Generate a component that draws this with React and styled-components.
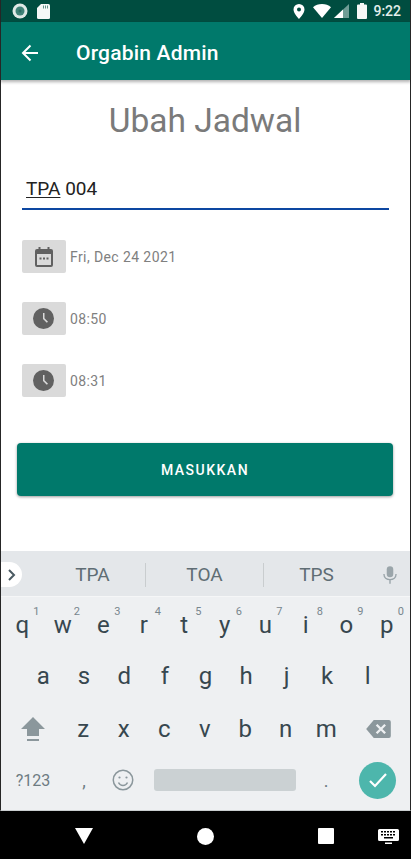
import React from "react";
import styled, { createGlobalStyle } from "styled-components";

const Global = createGlobalStyle`
  html, body {
    margin: 0;
    padding: 0;
    background: #fff;
  }
  * {
    box-sizing: border-box;
  }
`;

const Screen = styled.div`
  width: 411px;
  height: 859px;
  display: flex;
  flex-direction: column;
  overflow: hidden;
  font-family: Roboto, "Liberation Sans", sans-serif;
  background: #fff;
`;

const StatusBar = styled.div`
  height: 22px;
  flex: none;
  background: #004d40;
  border-left: 1px solid #262626;
  border-right: 1px solid #262626;
  display: flex;
  align-items: center;
  padding: 0 9px 0 11px;
  gap: 9px;
  color: #fff;
`;

const StatusTime = styled.span`
  font-size: 14px;
  font-weight: 500;
  color: #e4efec;
  margin-left: 1px;
`;

const Spacer = styled.div`
  flex: 1;
`;

const StatusIcons = styled.div`
  display: flex;
  align-items: center;
  gap: 5px;
`;

const Pin = styled.svg`
  margin-right: 3px;
`;

const Signal = styled.svg`
  margin-left: -2px;
`;

const Battery = styled.svg`
  margin-left: 3px;
`;

const AppBar = styled.div`
  height: 58px;
  flex: none;
  background: #00796b;
  border-left: 1px solid #262626;
  border-right: 1px solid #262626;
  box-shadow: 0 2px 3px rgba(0, 0, 0, 0.3);
  display: flex;
  align-items: center;
  padding: 3px 0 0 20px;
  gap: 37px;
  position: relative;
  z-index: 1;
`;

const AppTitle = styled.h1`
  margin: 0;
  font-size: 21px;
  font-weight: 500;
  color: #fff;
  letter-spacing: 0.2px;
`;

const Content = styled.main`
  height: 471px;
  flex: none;
  border-left: 1px solid #262626;
  border-right: 1px solid #262626;
  padding: 20px 17px 0 16px;
  display: flex;
  flex-direction: column;
`;

const Heading = styled.h2`
  margin: 0;
  text-align: center;
  font-size: 33.5px;
  line-height: 42px;
  font-weight: 400;
  color: #7a7a7a;
`;

const NameField = styled.div`
  margin: 30px 4px 0 5px;
  height: 38px;
  padding-left: 4px;
  border-bottom: 2px solid #0d47a1;
  font-size: 19px;
  line-height: 34px;
  color: #222;
`;

const Composing = styled.span`
  text-decoration: underline;
  text-underline-offset: 2px;
  text-decoration-thickness: 1px;
`;

const PickerList = styled.div`
  margin: 30px 0 0 4.5px;
  display: flex;
  flex-direction: column;
  gap: 29px;
`;

const PickerRow = styled.div`
  display: flex;
  align-items: center;
  gap: 4.5px;
  height: 33px;
`;

const PickerButton = styled.div`
  width: 44px;
  height: 33px;
  border-radius: 2px;
  background: #dadada;
  display: flex;
  align-items: center;
  justify-content: center;
`;

const PickerText = styled.span`
  font-size: 14px;
  color: #808080;
  letter-spacing: 0.4px;
`;

const SubmitButton = styled.button`
  margin-top: 46px;
  height: 53px;
  width: 376px;
  border: 0;
  border-radius: 4px;
  background: #00796b;
  color: #fff;
  font-family: inherit;
  font-size: 14px;
  font-weight: 500;
  letter-spacing: 1.5px;
  box-shadow: 0 1px 3px rgba(0, 0, 0, 0.4);
`;

const Keyboard = styled.div`
  height: 260px;
  flex: none;
  background: #eef0f2;
  border-left: 1px solid #262626;
  border-right: 1px solid #262626;
  border-bottom: 1px solid #c9cdcf;
  display: flex;
  flex-direction: column;
`;

const Suggestions = styled.div`
  height: 46px;
  flex: none;
  background: #e4e7ea;
  border-bottom: 1px solid #f5f6f7;
  display: grid;
  grid-template-columns: 39px 106px 118px 105px 1fr;
  align-items: center;
  padding-top: 2px;
`;

const Expand = styled.div`
  width: 21px;
  height: 25px;
  background: #fff;
  border-radius: 0 13px 13px 0;
  display: flex;
  align-items: center;
  justify-content: center;
`;

const Suggestion = styled.div`
  height: 24px;
  display: flex;
  align-items: center;
  justify-content: center;
  font-size: 19px;
  color: #5f6d74;
  border-right: ${(p) => (p.$divider ? "1px solid #c9cdcf" : "none")};
`;

const Mic = styled.div`
  display: flex;
  justify-content: center;
`;

const KeyRow = styled.div`
  height: ${(p) => p.$height}px;
  flex: none;
  display: grid;
  grid-template-columns: ${(p) => p.$columns};
  padding: ${(p) => p.$pad || "0"};
  align-items: center;
`;

const Key = styled.div`
  position: relative;
  text-align: center;
  font-size: 24px;
  line-height: 30px;
  color: #37474f;
  display: flex;
  align-items: center;
  justify-content: center;
`;

const Hint = styled.span`
  position: absolute;
  top: -4px;
  right: 3px;
  font-size: 11px;
  line-height: 12px;
  color: #78868d;
`;

const FnKey = styled.div`
  display: flex;
  align-items: center;
  justify-content: center;
  font-size: ${(p) => p.$size || 16}px;
  color: #6d7b82;
`;

const ShiftKey = styled(FnKey)`
  padding-left: 2px;
`;

const SpaceBar = styled.div`
  width: 142px;
  height: 22px;
  justify-self: center;
  border-radius: 3px;
  background: #cbd1d3;
`;

const DoneKey = styled.div`
  width: 37px;
  height: 37px;
  border-radius: 50%;
  background: #4db6ac;
  display: flex;
  align-items: center;
  justify-content: center;
  justify-self: center;
  margin-right: 1px;
`;

const NavBar = styled.div`
  height: 48px;
  flex: none;
  background: #000;
  display: grid;
  grid-template-columns: 54px 60px 182px 60px 10px 1fr;
  align-items: center;
  padding-top: 2px;
`;

const NavSlot = styled.div`
  grid-column: ${(p) => p.$col};
  display: flex;
  justify-content: center;
`;

const rows = [
  ["q1", "w2", "e3", "r4", "t5", "y6", "u7", "i8", "o9", "p0"],
  ["a", "s", "d", "f", "g", "h", "j", "k", "l"],
  ["z", "x", "c", "v", "b", "n", "m"],
];

export default function App() {
  return (
    <Screen>
      <Global />
      <StatusBar>
        <svg width="16" height="16" viewBox="0 0 16 16">
          <circle cx="8" cy="8" r="7.5" fill="#dfe9e6" />
          <circle cx="8" cy="8" r="4.5" fill="#3f8277" />
          <circle cx="8" cy="8" r="1.5" fill="#2a6d62" />
        </svg>
        <svg width="13" height="15" viewBox="0 0 13 15">
          <path d="M4 0h7.5A1.5 1.5 0 0 1 13 1.5v12a1.5 1.5 0 0 1-1.5 1.5h-10A1.5 1.5 0 0 1 0 13.500V4z" fill="#f5f8f7" />
          <path d="M6 1.500h1v3H6zM8 1.500h1v3H8zM10 1.500h1v3h-1z" fill="#004d40" opacity=".6" />
        </svg>
        <Spacer />
        <StatusIcons>
          <Pin width="12" height="15" viewBox="0 0 12 15">
            <path d="M6 0a5.500 5.500 0 0 0-5.500 5.500C.5 9.500 6 15 6 15s5.500-5.500 5.500-9.500A5.500 5.500 0 0 0 6 0zm0 7.500a2 2 0 1 1 0-4 2 2 0 0 1 0 4z" fill="#fff" />
          </Pin>
          <svg width="18" height="14" viewBox="0 0 18 14">
            <path d="M9 14L0 3.200C2.400 1.200 5.500 0 9 0s6.600 1.200 9 3.200z" fill="#fff" />
          </svg>
          <Signal width="15" height="14" viewBox="0 0 15 14">
            <path d="M0 14L15 0v14z" fill="#6f9d95" />
            <path d="M0 14l9-8.400V14z" fill="#fff" />
          </Signal>
          <Battery width="10" height="16" viewBox="0 0 10 16">
            <path d="M3 0h4v1.500h2a1 1 0 0 1 1 1V15a1 1 0 0 1-1 1H1a1 1 0 0 1-1-1V2.500a1 1 0 0 1 1-1h2z" fill="#f5f8f7" />
          </Battery>
          <StatusTime>9:22</StatusTime>
        </StatusIcons>
      </StatusBar>

      <AppBar>
        <svg width="18" height="18" viewBox="0 0 18 18" fill="none" stroke="#fff" strokeWidth="2">
          <path d="M17 9H2M9.500 1.500L2 9l7.500 7.500" />
        </svg>
        <AppTitle>Orgabin Admin</AppTitle>
      </AppBar>

      <Content>
        <Heading>Ubah Jadwal</Heading>
        <NameField>
          <Composing>TPA</Composing> 004
        </NameField>
        <PickerList>
          <PickerRow>
            <PickerButton>
              <svg width="20" height="20" viewBox="0 0 20 20">
                <path d="M4.500 0h2v2h7V0h2v2H17a2 2 0 0 1 2 2v14a2 2 0 0 1-2 2H3a2 2 0 0 1-2-2V4a2 2 0 0 1 2-2h1.500zM3 7v11h14V7z" fill="#616161" />
                <path d="M5.500 10.500h2v2h-2zM9 10.500h2v2H9zM12.500 10.500h2v2h-2z" fill="#616161" />
              </svg>
            </PickerButton>
            <PickerText>Fri, Dec 24 2021</PickerText>
          </PickerRow>
          {["08:50", "08:31"].map((t) => (
            <PickerRow key={t}>
              <PickerButton>
                <svg width="21" height="21" viewBox="0 0 21 21">
                  <circle cx="10.500" cy="10.500" r="10.500" fill="#616161" />
                  <path d="M10 5h1.500v5.200l3.500 3.500-1.200 1.100-3.800-3.900z" fill="#dadada" />
                </svg>
              </PickerButton>
              <PickerText>{t}</PickerText>
            </PickerRow>
          ))}
        </PickerList>
        <SubmitButton>MASUKKAN</SubmitButton>
      </Content>

      <Keyboard>
        <Suggestions>
          <Expand>
            <svg width="9" height="12" viewBox="0 0 9 12" fill="none" stroke="#4a5a62" strokeWidth="2">
              <path d="M2 1l5 5-5 5" />
            </svg>
          </Expand>
          <Suggestion $divider>TPA</Suggestion>
          <Suggestion $divider>TOA</Suggestion>
          <Suggestion>TPS</Suggestion>
          <Mic>
            <svg width="14" height="18" viewBox="0 0 15 19">
              <rect x="4" y="0" width="7" height="12" rx="3.500" fill="#9aa5aa" />
              <path d="M1 8.500c0 3.600 2.900 6 6.500 6s6.500-2.400 6.500-6M7.500 14.500V19" fill="none" stroke="#9aa5aa" strokeWidth="1.500" />
            </svg>
          </Mic>
        </Suggestions>

        <KeyRow $columns="repeat(10, 1fr)" $height={55} $pad="0 3px 0 1px">
          {rows[0].map((k) => (
            <Key key={k}>
              {k[0]}
              <Hint>{k[1]}</Hint>
            </Key>
          ))}
        </KeyRow>
        <KeyRow $columns="repeat(9, 1fr)" $pad="0 22px 0 22px" $height={48}>
          {rows[1].map((k) => (
            <Key key={k}>{k}</Key>
          ))}
        </KeyRow>
        <KeyRow $columns="62px repeat(7, 40.5px) 1fr" $height={57}>
          <ShiftKey>
            <svg width="26" height="26" viewBox="0 0 26 26">
              <path d="M13 1L1 13h6v7h12v-7h6z" fill="#8b979c" />
              <rect x="7" y="23" width="12" height="2" fill="#8b979c" />
            </svg>
          </ShiftKey>
          {rows[2].map((k) => (
            <Key key={k}>{k}</Key>
          ))}
          <FnKey>
            <svg width="25" height="18" viewBox="0 0 26 19">
              <path d="M8 0h16a2 2 0 0 1 2 2v15a2 2 0 0 1-2 2H8L0 9.500z" fill="#8b979c" />
              <path d="M11 5l9 9M20 5l-9 9" stroke="#eef0f2" strokeWidth="2.500" />
            </svg>
          </FnKey>
        </KeyRow>
        <KeyRow $columns="64px 38px 40px 163px 40px 1fr" $height={46}>
          <FnKey $size={16}>?123</FnKey>
          <FnKey $size={18}>,</FnKey>
          <FnKey>
            <svg width="22" height="22" viewBox="0 0 22 22" fill="none" stroke="#8b979c" strokeWidth="1.500">
              <circle cx="11" cy="11" r="9.750" />
              <path d="M6.500 13.500c1 2 2.700 3 4.500 3s3.500-1 4.500-3" />
              <circle cx="7.500" cy="8.500" r="1.100" fill="#8b979c" stroke="none" />
              <circle cx="14.500" cy="8.500" r="1.100" fill="#8b979c" stroke="none" />
            </svg>
          </FnKey>
          <SpaceBar />
          <FnKey $size={18}>.</FnKey>
          <DoneKey>
            <svg width="20" height="16" viewBox="0 0 20 16" fill="none" stroke="#fff" strokeWidth="2.200">
              <path d="M2 9l5 5L18 2" />
            </svg>
          </DoneKey>
        </KeyRow>
      </Keyboard>

      <NavBar>
        <NavSlot $col={2}>
          <svg width="18" height="16" viewBox="0 0 18 16">
            <path d="M0 0h18L9 16z" fill="#fff" />
          </svg>
        </NavSlot>
        <NavSlot $col={3}>
          <svg width="17" height="17" viewBox="0 0 17 17">
            <circle cx="8.500" cy="8.500" r="8.500" fill="#fff" />
          </svg>
        </NavSlot>
        <NavSlot $col={4}>
          <svg width="16" height="16" viewBox="0 0 16 16">
            <rect width="16" height="16" rx="1" fill="#fff" />
          </svg>
        </NavSlot>
        <NavSlot $col={6}>
          <svg width="21" height="15" viewBox="0 0 21 15">
            <path d="M1.500 0h18A1.500 1.500 0 0 1 21 1.500v9a1.500 1.500 0 0 1-1.500 1.500h-18A1.500 1.500 0 0 1 0 10.500v-9A1.500 1.500 0 0 1 1.500 0z" fill="#fff" />
            <path d="M3 2h2v1.500H3zM6 2h2v1.500H6zM9 2h2v1.500H9zM12 2h2v1.500h-2zM15 2h2v1.500h-2zM3 5h2v1.500H3zM6 5h2v1.500H6zM9 5h2v1.500H9zM12 5h2v1.500h-2zM15 5h2v1.500h-2zM6 8h9v1.500H6z" fill="#000" />
            <rect x="7" y="13.500" width="7" height="1.500" fill="#fff" />
          </svg>
        </NavSlot>
      </NavBar>
    </Screen>
  );
}
